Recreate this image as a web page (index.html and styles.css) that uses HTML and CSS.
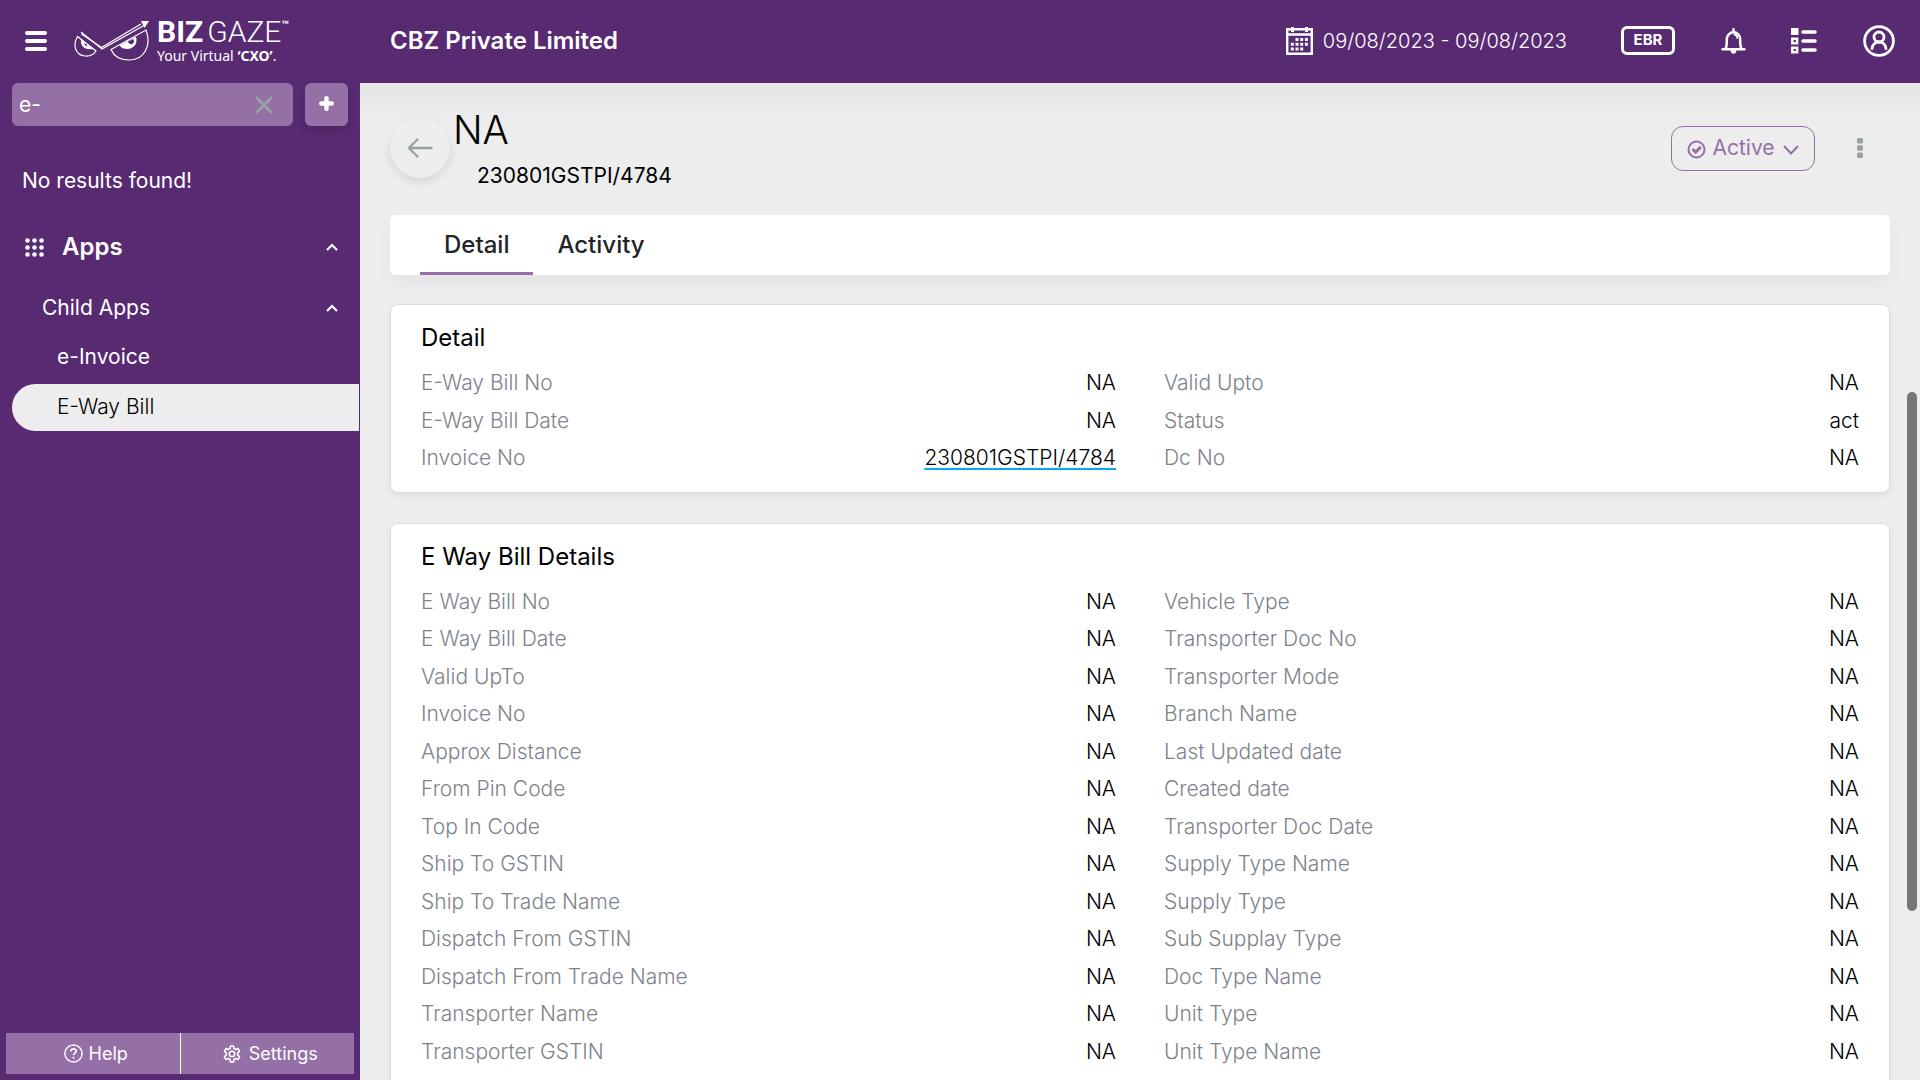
FILE: index.html
```html
<!DOCTYPE html>
<html lang="en">
<head>
<meta charset="utf-8">
<title>E-Way Bill - Bizgaze</title>
<meta name="viewport" content="width=device-width, initial-scale=1">
<link rel="stylesheet" href="styles.css">
</head>
<body>
<header class="topbar">
  <div class="brand">
    <button class="icon-btn" type="button" aria-label="Toggle menu">
      <svg width="22" height="20" viewBox="0 0 22 20" fill="none" stroke="currentColor" stroke-width="4" stroke-linecap="round"><path d="M2 2h18M2 10h18M2 18h18"/></svg>
    </button>
    <a class="logo" href="#">
      <svg class="logo-mark" width="76" height="40" viewBox="0 0 76 40" fill="none" stroke="currentColor" stroke-width="1.2">
        <path d="M7 11L28 28L70 4.500"/>
        <path d="M7.500 13L27.500 26.500L67 3"/>
        <path d="M3.500 15.500C-2 25 2 34 11 35C16 35.500 20 33 22 30Z"/>
        <path d="M37 28.500L72 9C78 25 70 39 55 39C47 39 40 35.500 37 28.500Z"/>
        <path fill="currentColor" stroke="none" fill-rule="evenodd" d="M7 18.500C6 25 11 29.500 19 28ZM10.500 22a1.800 1.800 0 1 0 3.600 1.500z"/>
        <path fill="currentColor" stroke="none" fill-rule="evenodd" d="M45.500 24.500L62 15.500C64.500 24 58 28 53.500 28C50 28 47 27 45.500 24.500ZM54 20.500a3 3 0 1 0 5-2.500z"/>
        <path d="M67 0L75 0L70.500 7Z" fill="currentColor" stroke="none"/>
      </svg>
      <span class="logo-text">
        <span class="logo-name"><b>BIZ</b>GAZE<sup>™</sup></span>
        <span class="logo-tag">Your Virtual <b>‘CXO’</b>.</span>
      </span>
    </a>
  </div>
  <h1 class="company">CBZ Private Limited</h1>
  <div class="tools">
    <button class="date-range" type="button">
      <svg width="27" height="28" viewBox="0 0 27 28" fill="none" stroke="currentColor"><path stroke-width="2.400" d="M1.200 2.200h24.600v24.600H1.200zM1 7.500h25"/><path stroke-width="3" d="M6.500 0v5M20.500 0v5"/><path stroke-width="3" stroke-dasharray="3 1.700" d="M9.500 12.500h13M4.800 17.200h17.500M4.800 22h12.500"/></svg>
      <span>09/08/2023 - 09/08/2023</span>
    </button>
    <button class="ebr" type="button">EBR</button>
    <button class="icon-btn" type="button" aria-label="Notifications">
      <svg width="25" height="26" viewBox="0 0 25 26" fill="none" stroke="currentColor" stroke-width="2.500" stroke-linecap="round" stroke-linejoin="round"><path d="M12.500 1.300V3M1.500 21.300h22M4.500 21C6 18.500 5.800 15 5.800 11a6.700 6.700 0 0 1 13.400 0c0 4-.2 7.500 1.300 10"/><path stroke-width="1.800" d="M13.500 6.500c1.800.3 2.800 1.500 2.800 3.500"/><path d="M10 23a2.500 2.300 0 0 0 5 0z" fill="currentColor" stroke-width="1"/></svg>
    </button>
    <button class="icon-btn" type="button" aria-label="Task list">
      <svg width="27" height="26" viewBox="0 0 27 26" fill="none" stroke="currentColor"><path d="M0 0h7.500v7H0z" fill="currentColor" stroke="none"/><path stroke-width="2.500" d="M1.300 10.800h4.800v4.500H1.300zM1.300 19.800h4.800v4.500H1.300z"/><path stroke-width="3.600" stroke-linecap="round" d="M12 4h12M12 13h12M12 22h12"/></svg>
    </button>
    <button class="icon-btn" type="button" aria-label="Profile">
      <svg width="32" height="32" viewBox="0 0 32 32" fill="none" stroke="currentColor" stroke-width="2.800"><circle cx="16" cy="16" r="14.400"/><circle cx="16" cy="12" r="5"/><path stroke-linecap="round" d="M9 23.500c1-8.700 13-8.700 14 0"/></svg>
    </button>
  </div>
</header>

<div class="shell">
  <aside class="sidebar">
    <form class="search">
      <div class="search-field">
        <input class="search-input" type="text" value="e-" aria-label="Search">
        <button class="clear" type="button" aria-label="Clear">
          <svg width="18" height="18" viewBox="0 0 18 18" fill="none" stroke="currentColor" stroke-width="3" stroke-linecap="round"><path d="M2 2l14 14M16 2L2 16"/></svg>
        </button>
      </div>
      <button class="add" type="button" aria-label="Add">
        <svg width="15" height="15" viewBox="0 0 15 15" fill="none" stroke="currentColor" stroke-width="4.500" stroke-linecap="round"><path d="M7.500 2.300v10.400M2.300 7.500h10.400"/></svg>
      </button>
    </form>
    <p class="empty">No results found!</p>
    <nav class="nav">
      <button class="nav-group" type="button">
        <svg width="19" height="19" viewBox="0 0 19 19" fill="currentColor"><circle cx="2.500" cy="2.500" r="2.300"/><circle cx="9.500" cy="2.500" r="2.300"/><circle cx="16.500" cy="2.500" r="2.300"/><circle cx="2.500" cy="9.500" r="2.300"/><circle cx="9.500" cy="9.500" r="2.300"/><circle cx="16.500" cy="9.500" r="2.300"/><circle cx="2.500" cy="16.500" r="2.300"/><circle cx="9.500" cy="16.500" r="2.300"/><circle cx="16.500" cy="16.500" r="2.300"/></svg>
        <span>Apps</span>
        <svg class="chevron" width="12" height="8" viewBox="0 0 12 8" fill="none" stroke="currentColor" stroke-width="2.200"><path d="M1 7l5-5 5 5"/></svg>
      </button>
      <button class="nav-sub" type="button">
        <span>Child Apps</span>
        <svg class="chevron" width="12" height="8" viewBox="0 0 12 8" fill="none" stroke="currentColor" stroke-width="2.200"><path d="M1 7l5-5 5 5"/></svg>
      </button>
      <a class="nav-link" href="#">e-Invoice</a>
      <a class="nav-link current" href="#" aria-current="page">E-Way Bill</a>
    </nav>
    <div class="side-foot">
      <button type="button">
        <svg width="19" height="19" viewBox="0 0 19 19" fill="none" stroke="currentColor" stroke-width="1.500"><circle cx="9.500" cy="9.500" r="8.600"/><path stroke-width="1.700" d="M6.800 7.500c0-3.400 5.400-3.400 5.400-.2 0 1.800-2.700 1.900-2.700 4M9.500 12.700v2"/></svg>
        Help
      </button>
      <button class="settings" type="button">
        <svg width="18" height="18" viewBox="0 0 18 18" fill="none" stroke="currentColor" stroke-width="1.600" stroke-linejoin="round"><circle cx="9" cy="9" r="2.700"/><path d="M7.500 1h3l.5 2.500 1.600.9L15 3.600l1.600 2.600L14.700 8v2l1.900 1.800-1.600 2.600-2.400-.8-1.600.9-.5 2.500h-3L7 14.500l-1.600-.9-2.400.8-1.600-2.600L3.300 10V8L1.400 6.200 3 3.600l2.400.8L7 3.500z"/></svg>
        Settings
      </button>
    </div>
  </aside>

  <main class="main">
    <div class="page-head">
      <button class="back" type="button" aria-label="Back">
        <svg width="26" height="20" viewBox="0 0 26 20" fill="none" stroke="currentColor" stroke-width="2.400" stroke-linecap="round" stroke-linejoin="round"><path d="M24.500 10H2M10.500 1.500L1.800 10l8.700 8.500"/></svg>
      </button>
      <div class="titles">
        <h2>NA</h2>
        <p>230801GSTPI/4784</p>
      </div>
      <button class="status" type="button">
        <svg width="19" height="22" viewBox="0 0 19 22" fill="none" stroke="currentColor" stroke-width="2"><circle cx="9.500" cy="12.500" r="8"/><path stroke-width="3" d="M5.500 12l3.200 3.200 5-5.300"/></svg>
        <span>Active</span>
        <svg class="caret" width="16" height="14" viewBox="0 0 16 14" fill="none" stroke="currentColor" stroke-width="2" stroke-linecap="round"><path d="M1.500 5.500L8 12.500l6.500-7"/></svg>
      </button>
      <button class="more" type="button" aria-label="More actions">
        <svg width="6" height="20" viewBox="0 0 6 20" fill="currentColor"><rect width="6" height="5.500" rx="1.500"/><rect y="7.200" width="6" height="5.500" rx="1.500"/><rect y="14.400" width="6" height="5.500" rx="1.500"/></svg>
      </button>
    </div>
    <div class="tabs" role="tablist">
      <button class="tab active" type="button" role="tab" aria-selected="true">Detail</button>
      <button class="tab" type="button" role="tab" aria-selected="false">Activity</button>
    </div>
    <div class="cards">
      <section class="card">
        <h3>Detail</h3>
        <div class="columns">
          <dl>
            <div><dt>E-Way Bill No</dt><dd>NA</dd></div>
            <div><dt>E-Way Bill Date</dt><dd>NA</dd></div>
            <div><dt>Invoice No</dt><dd><a href="#">230801GSTPI/4784</a></dd></div>
          </dl>
          <dl>
            <div><dt>Valid Upto</dt><dd>NA</dd></div>
            <div><dt>Status</dt><dd>act</dd></div>
            <div><dt>Dc No</dt><dd>NA</dd></div>
          </dl>
        </div>
      </section>
      <section class="card">
        <h3>E Way Bill Details</h3>
        <div class="columns">
          <dl>
            <div><dt>E Way Bill No</dt><dd>NA</dd></div>
            <div><dt>E Way Bill Date</dt><dd>NA</dd></div>
            <div><dt>Valid UpTo</dt><dd>NA</dd></div>
            <div><dt>Invoice No</dt><dd>NA</dd></div>
            <div><dt>Approx Distance</dt><dd>NA</dd></div>
            <div><dt>From Pin Code</dt><dd>NA</dd></div>
            <div><dt>Top In Code</dt><dd>NA</dd></div>
            <div><dt>Ship To GSTIN</dt><dd>NA</dd></div>
            <div><dt>Ship To Trade Name</dt><dd>NA</dd></div>
            <div><dt>Dispatch From GSTIN</dt><dd>NA</dd></div>
            <div><dt>Dispatch From Trade Name</dt><dd>NA</dd></div>
            <div><dt>Transporter Name</dt><dd>NA</dd></div>
            <div><dt>Transporter GSTIN</dt><dd>NA</dd></div>
          </dl>
          <dl>
            <div><dt>Vehicle Type</dt><dd>NA</dd></div>
            <div><dt>Transporter Doc No</dt><dd>NA</dd></div>
            <div><dt>Transporter Mode</dt><dd>NA</dd></div>
            <div><dt>Branch Name</dt><dd>NA</dd></div>
            <div><dt>Last Updated date</dt><dd>NA</dd></div>
            <div><dt>Created date</dt><dd>NA</dd></div>
            <div><dt>Transporter Doc Date</dt><dd>NA</dd></div>
            <div><dt>Supply Type Name</dt><dd>NA</dd></div>
            <div><dt>Supply Type</dt><dd>NA</dd></div>
            <div><dt>Sub Supplay Type</dt><dd>NA</dd></div>
            <div><dt>Doc Type Name</dt><dd>NA</dd></div>
            <div><dt>Unit Type</dt><dd>NA</dd></div>
            <div><dt>Unit Type Name</dt><dd>NA</dd></div>
          </dl>
        </div>
      </section>
    </div>
    <div class="scroll-thumb"></div>
  </main>
</div>
</body>
</html>
```
FILE: styles.css
```css
:root {
  --purple: #582a72;
  --lilac: #9570a6;
  --page: #ededed;
  --muted: #7e838b;
}

* { box-sizing: border-box; }

body {
  margin: 0;
  height: 100vh;
  display: flex;
  flex-direction: column;
  overflow: hidden;
  background: var(--page);
  font-family: Inter, "Liberation Sans", sans-serif;
  font-size: 21px;
  line-height: 1.5;
  color: #000;
}

h1, h2, h3, p, dl, dd { margin: 0; font-weight: 400; }

button {
  padding: 0;
  border: 0;
  background: none;
  color: inherit;
  font: inherit;
  display: flex;
  align-items: center;
}

a { color: inherit; text-decoration: none; }
svg { flex: none; display: block; }

/* Top bar */
.topbar {
  flex: none;
  height: 83px;
  padding-bottom: 2px;
  display: flex;
  align-items: center;
  background: var(--purple);
  color: #fff;
}

.brand {
  flex: none;
  width: 390px;
  padding-left: 25px;
  display: flex;
  align-items: center;
  gap: 27px;
}

.logo { display: flex; align-items: center; gap: 7px; }
.logo-text { display: flex; flex-direction: column; font-family: Roboto, sans-serif; }
.logo-name { font-size: 30px; line-height: 30px; font-weight: 300; white-space: nowrap; }
.logo-name b { margin-right: 4px; font-weight: 700; }
.logo-name sup { font-size: 12px; line-height: 1; font-weight: 700; vertical-align: 13px; }
.logo-tag { font-family: "Noto Sans", sans-serif; font-size: 14px; line-height: 18px; }

.company { font-size: 24px; font-weight: 600; }

.tools {
  margin-left: auto;
  padding-right: 25px;
  display: flex;
  align-items: center;
}

.date-range { gap: 10px; margin-right: 54px; font-size: 20px; font-weight: 300; }

.ebr {
  width: 54px;
  height: 29px;
  margin-right: 46px;
  justify-content: center;
  border: 3px solid #fff;
  border-radius: 6px;
  font-size: 15px;
  font-weight: 700;
}

.tools .icon-btn + .icon-btn { margin-left: 45px; }

/* Sidebar */
.shell { flex: 1; min-height: 0; display: flex; }

.sidebar {
  flex: none;
  width: 360px;
  display: flex;
  flex-direction: column;
  background: var(--purple);
  color: #fff;
}

.search { display: flex; gap: 12px; padding: 0 12px; }

.search-field {
  flex: 1;
  min-width: 0;
  height: 43px;
  display: flex;
  align-items: center;
  border-radius: 6px;
  background: var(--lilac);
}

.search-input {
  flex: 1;
  min-width: 0;
  padding: 0 7px;
  border: 0;
  outline: 0;
  background: none;
  color: #fff;
  font: inherit;
}

.clear { padding-right: 20px; color: #98a2a6; }

.add {
  flex: none;
  width: 43px;
  height: 43px;
  padding-bottom: 3px;
  justify-content: center;
  border-radius: 6px;
  background: var(--lilac);
  box-shadow: 0 4px 8px rgba(0, 0, 0, .15);
}

.empty { padding: 39px 22px 16px; }

.nav { display: flex; flex-direction: column; }
.nav-group, .nav-sub { padding-right: 22px; }
.nav-group { height: 69px; padding-left: 25px; gap: 18px; font-size: 24px; font-weight: 600; }
.nav-sub { height: 52px; padding-left: 42px; }
.chevron { margin-left: auto; }

.nav-link {
  height: 47px;
  margin: 0 1px 3px 12px;
  padding-left: 45px;
  display: flex;
  align-items: center;
  border-radius: 24px 0 0 24px;
}

.nav-link.current { background: var(--page); color: #000; font-weight: 300; }

.side-foot { margin-top: auto; padding: 0 6px 6px; display: flex; font-size: 18px; }
.side-foot button {
  flex: 1;
  height: 41px;
  padding-left: 6px;
  justify-content: center;
  gap: 6px;
  background: var(--lilac);
}
.side-foot .settings { gap: 8px; border-left: 1px solid #fff; }

/* Record page */
.main {
  flex: 1;
  min-width: 0;
  position: relative;
  padding: 0 30px;
  display: flex;
  flex-direction: column;
  background: linear-gradient(#e5e5e5, var(--page) 40px);
}

.page-head { flex: none; height: 132px; padding-bottom: 2px; display: flex; align-items: center; }

.back {
  width: 60px;
  height: 60px;
  justify-content: center;
  border-radius: 50%;
  background: #eee;
  color: #98a2a6;
  box-shadow: 0 4px 8px rgba(0, 0, 0, .1);
}

.titles { padding: 4px 0 0 3px; flex: 1; }
.titles h2 { font-size: 39px; line-height: 52px; font-weight: 300; }
.titles p { padding-left: 24px; line-height: 40px; }

.status {
  width: 144px;
  height: 45px;
  justify-content: center;
  gap: 6px;
  border: 1px solid var(--lilac);
  border-radius: 12px;
  color: var(--lilac);
}

.caret { margin-left: 2px; }
.more { margin: 0 27px 0 42px; color: #98a2a6; }

.tabs {
  flex: none;
  height: 60px;
  padding: 0 30px;
  display: flex;
  border-radius: 6px;
  background: #fff;
  box-shadow: 0 8px 16px rgba(0, 0, 0, .04);
}

.tab {
  padding: 2px 24px 0;
  border-bottom: 3px solid transparent;
  font-size: 24px;
  font-weight: 500;
  color: #212529;
}
.tab.active { border-color: var(--lilac); }

.cards {
  flex: 1;
  min-height: 0;
  margin-top: 29px;
  display: flex;
  flex-direction: column;
  gap: 30px;
}

.card {
  flex: none;
  padding: 15px 30px;
  border: 1px solid #dcdcdf;
  border-radius: 8px;
  background: #fff;
  box-shadow: 0 3px 6px rgba(0, 0, 0, .06);
}

.card h3 { margin-bottom: 8px; font-size: 24px; line-height: 36px; }
.columns { display: grid; grid-template-columns: 1fr 1fr; gap: 48px; }
.columns dl > div { display: flex; justify-content: space-between; padding: 3px 0; }
.columns dt, .columns dd { font-weight: 300; }
.columns dt { color: var(--muted); }
.columns dd a {
  text-decoration: underline 2px #03a9f4;
  text-decoration-skip-ink: none;
  text-underline-offset: 3px;
}

.scroll-thumb {
  position: absolute;
  top: 31%;
  right: 3px;
  width: 10px;
  height: 52%;
  border-radius: 5px;
  background: #777;
}
```
